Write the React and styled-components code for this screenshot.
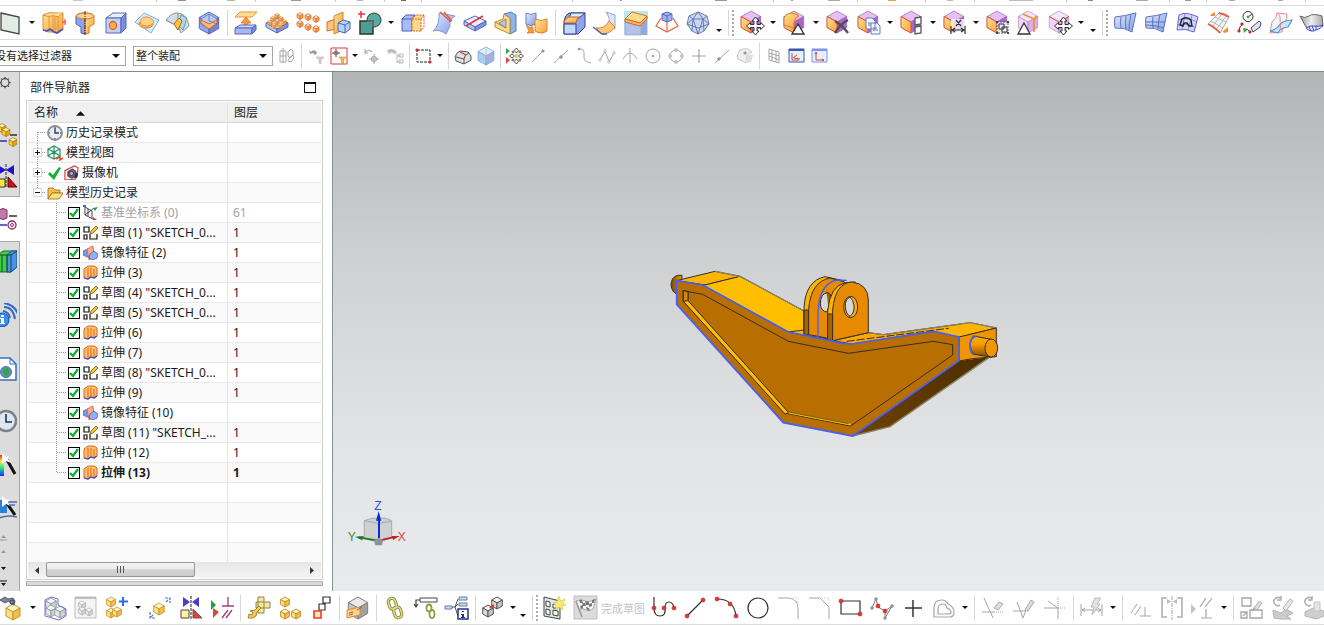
import React from "react";
import styled, { createGlobalStyle } from "styled-components";

const GlobalStyle = createGlobalStyle`
  * {
    box-sizing: border-box;
  }
  body {
    margin: 0;
    overflow: hidden;
    background: #fff;
    color: #1a1a1a;
    font-family: "Noto Sans", "Noto Sans CJK SC", sans-serif;
    font-size: 12px;
  }
  button, select, input {
    font: inherit;
    color: inherit;
    margin: 0;
    padding: 0;
    border: none;
    background: none;
    border-radius: 0;
  }
  svg {
    display: block;
    flex: none;
  }
`;

const Window = styled.div`
  height: 100vh;
  display: flex;
  flex-direction: column;
  overflow: hidden;
`;

const Strip = styled.div`
  height: 6px;
  flex: none;
  display: flex;
  overflow: hidden;
  border-bottom: 1px solid #dcdcdc;
`;

const StripPart = styled.div`
  flex: 0 0 ${(p) => p.$w}px;
  height: 2px;
  display: flex;
  justify-content: space-around;
  border-right: 1px solid #c8c8c8;
`;

const StripMark = styled.span`
  width: ${(p) => p.$w}px;
  height: 1px;
  background: ${(p) => p.$color};
`;

const Bar = styled.div`
  height: ${(p) => p.$h}px;
  flex: none;
  display: flex;
  align-items: center;
  overflow: hidden;
  background: #fff;
  border-bottom: 1px solid ${(p) => p.$line || "#dcdcdc"};
`;

const Group = styled.div`
  display: flex;
  flex: none;
  align-items: center;
  height: 100%;
  margin-left: ${(p) => p.$pull || 0}px;
`;

const Tool = styled.button`
  width: ${(p) => (p.$small ? 23 : 31)}px;
  height: 26px;
  flex: none;
  display: flex;
  align-items: center;
  justify-content: center;
  svg {
    overflow: visible;
  }
`;

const Drop = styled.button`
  width: ${(p) => p.$w || 12}px;
  height: ${(p) => (p.$low ? 18 : 12)}px;
  flex: none;
  display: flex;
  align-items: ${(p) => (p.$low ? "flex-end" : "center")};
  justify-content: center;
`;

const Rule = styled.span`
  width: 1px;
  height: 26px;
  flex: none;
  margin: 0 ${(p) => (p.$end ? 0 : 2)}px 0 3px;
  background: #d6d6d6;
`;

const Grip = styled.span`
  width: 2px;
  height: 26px;
  flex: none;
  margin: 0 3px;
  background: repeating-linear-gradient(#aaa 0 2px, #fff 2px 4px);
`;

const Caption = styled.span`
  width: 48px;
  flex: none;
  color: #c4c4c4;
  font-size: 11px;
  white-space: nowrap;
`;

const Combo = styled.div`
  display: grid;
  flex: none;
  align-items: center;
  width: ${(p) => p.$w}px;
  height: 20px;
  margin: 0 ${(p) => p.$mr || 3}px 0 ${(p) => p.$ml}px;
  border: 1px solid #a6a6a6;
  select,
  svg {
    grid-area: 1 / 1;
  }
  select {
    width: 100%;
    height: 18px;
    padding-left: 2px;
    appearance: none;
    font-size: 11px;
    outline: none;
  }
  svg {
    justify-self: end;
    margin-right: 5px;
    pointer-events: none;
  }
`;

const Main = styled.main`
  flex: 1;
  min-height: 0;
  display: flex;
`;

const Side = styled.nav`
  width: 20px;
  flex: none;
  display: flex;
  flex-direction: column;
  background: #dcdcdc;
`;

const SideTab = styled.button`
  height: ${(p) => p.$h}px;
  flex: none;
  display: flex;
  align-items: center;
  justify-content: flex-end;
  overflow: hidden;
  padding-right: ${(p) => (p.$active ? 3 : 2)}px;
  border-right: ${(p) => (p.$active ? 0 : 1)}px solid #a8a8a8;
  background: ${(p) => (p.$active ? "#fff" : "#dcdcdc")};
  border-top: ${(p) => (p.$active ? 1 : 0)}px solid #a8a8a8;
  border-bottom: ${(p) => (p.$active ? 1 : 0)}px solid #a8a8a8;
`;

const SideFill = styled.div`
  height: ${(p) => (p.$h ? `${p.$h}px` : "auto")};
  flex: ${(p) => (p.$h ? "none" : "1")};
  border-right: 1px solid #a8a8a8;
`;

const Panel = styled.section`
  width: 313px;
  flex: none;
  display: flex;
  flex-direction: column;
  padding: 0 9px 5px 6px;
  border-right: 1px solid #8b9296;
`;

const PanelHead = styled.header`
  height: 28px;
  flex: none;
  display: flex;
  align-items: center;
  justify-content: space-between;
  padding: 2px 7px 0 4px;
  h2 {
    margin: 0;
    font-size: 12px;
    font-weight: 400;
  }
`;

const Maximize = styled.button`
  width: 12px;
  height: 11px;
  border: 1px solid #111;
  border-top-width: 2px;
`;

const TreeBox = styled.div`
  flex: 1;
  min-height: 0;
  display: flex;
  flex-direction: column;
  padding: 1px;
  border: 1px solid #cfcfcf;
`;

const TreeClip = styled.div`
  flex: 1;
  min-height: 0;
  overflow: hidden;
`;

const Table = styled.table`
  width: 100%;
  table-layout: fixed;
  border-collapse: separate;
  border-spacing: 0;
  line-height: 18px;
  th,
  td {
    padding: 0 0 0 5px;
    font-weight: inherit;
    text-align: left;
    white-space: nowrap;
    overflow: hidden;
    border-bottom: 1px solid #e8e8e8;
  }
  th:first-child,
  td:first-child {
    width: 200px;
    border-right: 1px solid #e4e4e4;
  }
  th {
    height: 21px;
    padding: 2px 0 0 6px;
    background: #f0f0f0;
    border-color: #d8d8d8;
  }
`;

const Row = styled.tr`
  height: 20px;
  background: ${(p) => (p.$odd ? "#fafafa" : "#fff")};
  color: ${(p) => (p.$dim ? "#a2a2a2" : "#1a1a1a")};
  font-weight: ${(p) => (p.$bold ? 700 : 400)};
`;

const SortHead = styled.span`
  display: flex;
  align-items: center;
  gap: 18px;
`;

const Node = styled.div`
  height: 19px;
  display: flex;
  align-items: center;
  gap: 3px;
  label {
    word-break: keep-all;
  }
`;

const dots = (dir) =>
  `repeating-linear-gradient(to ${dir}, #9a9a9a 0 1px, transparent 1px 2px)`;

const RootGuide = styled.span`
  width: 14px;
  height: 19px;
  flex: none;
  margin-right: -3px;
  display: flex;
  align-items: center;
  background-image: ${dots("bottom")}, ${dots("right")};
  background-repeat: no-repeat;
  background-size: 1px ${(p) => (p.$first || p.$last ? 10 : 19)}px, 8px 1px;
  background-position: 4px ${(p) => (p.$first ? 9 : 0)}px, 5px 9px;
`;

const LeafGuide = styled.span`
  width: 35px;
  height: 19px;
  flex: none;
  margin-right: -3px;
  background-image: ${dots("bottom")}, ${dots("right")};
  background-repeat: no-repeat;
  background-size: 1px ${(p) => (p.$last ? 10 : 19)}px, 9px 1px;
  background-position: 23px 0, 24px 9px;
`;

const Toggle = styled.button`
  width: 9px;
  height: 9px;
  border: 1px solid #d8d8d8;
  background: ${(p) => (p.$open ? "" : "linear-gradient(#111, #111) 3px 1px / 1px 5px no-repeat,")}
    linear-gradient(#111, #111) 1px 3px / 5px 1px no-repeat, #fff;
`;

const Check = styled.input`
  width: 12px;
  height: 12px;
  flex: none;
  appearance: none;
  border: 1px solid #000;
  background: #fff;
  &:checked {
    background: #fff
      url("data:image/svg+xml,%3Csvg xmlns='http://www.w3.org/2000/svg' viewBox='0 0 10 10'%3E%3Cpath d='M1 5l3 3 5-7' fill='none' stroke='%2310b030' stroke-width='2.4'/%3E%3C/svg%3E")
      center / 10px 10px;
  }
`;

const ScrollRow = styled.div`
  height: 16px;
  flex: none;
  display: flex;
  background: linear-gradient(#e6e6e6, #f4f4f4);
`;

const ScrollEnd = styled.button`
  width: 18px;
  flex: none;
  display: flex;
  align-items: center;
  justify-content: center;
`;

const ScrollTrack = styled.div`
  flex: 1;
`;

const Thumb = styled.div`
  width: 58%;
  height: 15px;
  display: flex;
  align-items: center;
  justify-content: center;
  gap: 2px;
  border: 1px solid #979797;
  border-radius: 2px;
  background: linear-gradient(#f5f5f5, #e9e9eb 50%, #d6d6d8 50%, #cbcbcd);
  i {
    width: 1px;
    height: 7px;
    background: #555;
  }
`;

const Sash = styled.div`
  height: 5px;
  flex: none;
  margin-top: 1px;
  background: #dadada;
  border: 1px solid #a8a8a8;
  border-top-color: #bcbcbc;
`;

const Viewport = styled.section`
  flex: 1;
  min-width: 0;
  position: relative;
  overflow: hidden;
  background: linear-gradient(#b3b4b6, #cfd0d2 36%, #e3e4e6 73%, #e8eaec);
`;

const Model = styled.svg`
  position: absolute;
  left: 327px;
  top: 188px;
`;

const Triad = styled.svg`
  position: absolute;
  left: 2px;
  bottom: 31px;
  font-family: "Liberation Sans", sans-serif;
`;

/* ---------- icon building blocks ---------- */

const BLUE = ["#e3eefe", "#b3c9f6", "#8093e2", "#5468bc"];
const GOLD = ["#fff4c4", "#fde08a", "#f2bf4c", "#c8932c"];
const ORANGE = ["#ffe3ae", "#ffc468", "#f59a3c", "#d0702a"];
const VIOLET = ["#e8bff2", "#fdc44c", "#ab66ca", "#9a62b4"];
const GREY = ["#fafafa", "#e8e8e8", "#d2d2d2", "#b2b2b2"];
const ASM = ["#fff1a8", "#ffd23c", "#e8a818", "#a87410"];
const WIRE = ["#f4f6f6", "#e3e7e7", "#ccd3d3", "#8a9496"];

const Cube = ({ x = 12, y = 12, r = 10, c = BLUE, w = 1 }) => {
  const d = r * 0.88;
  const h = r / 2;
  return (
    <g stroke={c[3]} strokeWidth={w} strokeLinejoin="round">
      <path fill={c[0]} d={`M${x} ${y - r}l${d} ${h}l${-d} ${h}l${-d} ${-h}z`} />
      <path fill={c[1]} d={`M${x - d} ${y - h}l${d} ${h}v${r}l${-d} ${-h}z`} />
      <path fill={c[2]} d={`M${x + d} ${y - h}l${-d} ${h}v${r}l${d} ${-h}z`} />
    </g>
  );
};

const Slab = ({ y = 12, c = BLUE, t = 4 }) => (
  <g stroke={c[3]} strokeLinejoin="round">
    <path fill={c[0]} d={`M12 ${y - 6}l11 5-11 6-11-6z`} />
    <path fill={c[1]} d={`M1 ${y - 1}l11 6v${t}l-11-6z`} />
    <path fill={c[2]} d={`M23 ${y - 1}l-11 6v${t}l11-6z`} />
  </g>
);

const PALE = ["#f6e8fa", "#eed6f4", "#d8afe6", "#b083c4"];

const FaceCube = ({ pale, children }) => (
  <>
    <Cube x={11} y={11} r={11} c={pale ? PALE : VIOLET} w={0.7} />
    {!pale && <path d="M1 5.500l10 5.500v11L1 16.500z" fill="url(#amber)" stroke="#e0573e" />}
    {pale === "move" && <path d="M1 5.500l10 5.500 10-5.500" fill="none" stroke="#e0573e" />}
    {children}
  </>
);

const Move = () => (
  <path
    d="M15.500 6l3.500 4h-2v3.500h3.500v-2l4 3.500-4 3.500v-2h-3.500v3.500h2l-3.500 4-3.500-4h2v-3.500h-3.500v2l-4-3.500 4-3.500v2h3.500V10h-2z"
    fill="#fff"
    stroke="#333"
    strokeWidth="1"
  />
);

const Line = ({ d, c = "#a5a5a5", w = 1, fill = "none", dash }) => (
  <path d={d} stroke={c} strokeWidth={w} fill={fill} strokeDasharray={dash} />
);

const Dot = ({ x, y, r = 2, c = "#e33" }) => (
  <circle cx={x} cy={y} r={r} fill={c} stroke={c === "#e33" ? "#a11" : "#8a8a8a"} strokeWidth="0.5" />
);

const Tick = () => <path d="M1 8l2-2 3 3 6-8 2 1-7 12z" fill="#12b434" />;

const I = {
  sheet: <path d="M2 2l18 4v17L2 19z" fill="#e3ebe6" stroke="#444" strokeWidth="1.3" />,
  extrude: (
    <>
      <path d="M1 4l5-2q4-1 6 0h9v16l-5 4-4-1H6l-5-2z" fill="url(#amber)" stroke="#e08a3c" />
      <path d="M1 4q5 2 8 1t7 1l5-4" fill="#ffe6a4" stroke="#e08a3c" />
      <path d="M7 5v16M11 5v16M13 5v16M16 6v16" stroke="#e08a3c" strokeWidth=".8" fill="none" />
      <Line d="M1 19l4 1 3-2 4 3 3 1 6-4" c="#3a55c8" w={1.6} />
      <Line d="M20 11h4M23 8v6" c="#e33" />
    </>
  ),
  revolve: (
    <>
      <path d="M12 2Q4 2 3 5v8l5 3v6q2 1 4 1z" fill="#8aa5ea" stroke="#4a5fc0" />
      <path d="M12 2q8 0 9 3v8l-5 3v6q-2 1-4 1z" fill="url(#amber)" stroke="#d97a2c" />
      <path d="M3 5q2-3 9-3t9 3q-2 3-9 3T3 5z" fill="#ffd08a" stroke="#d97a2c" />
      <Line d="M12 0v24" c="#333" dash="4 1 1 1" />
    </>
  ),
  hole: (
    <>
      <path d="M2 7l7-5h13l-5 5z" fill="#e6effd" stroke="#5468bc" />
      <path d="M2 7h15v15H2z" fill="#c0d2f9" stroke="#5468bc" />
      <path d="M17 7l5-5v15l-5 5z" fill="#7c8ce0" stroke="#5468bc" />
      <ellipse cx="9" cy="14.500" rx="3.500" ry="4" fill="#ffb350" stroke="#e0602c" strokeWidth="1.400" />
    </>
  ),
  emboss: (
    <>
      <path d="M0 11L9 2l15 7-8 13z" fill="#d6eef9" stroke="#86add6" />
      <ellipse cx="11" cy="13" rx="7" ry="4" fill="#ffb95c" stroke="#dd7a30" />
      <path d="M5 12q0-6 6-6t8 5q-2 4-7 4t-7-3z" fill="#ffd283" stroke="#dd7a30" strokeWidth=".7" />
    </>
  ),
  bend: (
    <>
      <path d="M0 9Q6 1 12 2q9 1 11 13l-8 7-3-7q-2-3-5-2z" fill="#d4dde1" stroke="#8798a0" />
      <path d="M0 9l7 4M12 2v8" fill="none" stroke="#8798a0" />
      <path d="M12 14l3-10 6 3-4 12z" fill="#a9d6e8" stroke="#5a8aa0" strokeWidth=".8" />
      <path d="M8 13l5-6 3 3-4 9z" fill="#ffc23c" stroke="#a86c18" />
    </>
  ),
  pocket: (
    <>
      <Cube r={11} c={["#a9c2f3", "#8fa6ee", "#7286d8", "#5468bc"]} />
      <path d="M4 8l8-5 8 5v5l-8 5-8-5z" fill="#b8caf4" stroke="#5468bc" strokeWidth=".7" />
      <path d="M4 9l8 4 8-4v3l-8 6-8-6z" fill="#ffc070" stroke="#e0602c" />
      <path d="M12 3v7l8 3" fill="none" stroke="#5468bc" strokeWidth=".7" />
    </>
  ),
  offset: (
    <>
      <path d="M6 1h17l-5 5H1z" fill="#ffe08c" stroke="#eb9040" />
      <path d="M12 6l5 6h-3v4h-4v-4H7z" fill="#f79a3a" stroke="#d0702a" strokeWidth=".7" />
      <path d="M1 17l5-3h16l-4 3z" fill="#cfdafb" stroke="#5468bc" />
      <path d="M1 17h17v6H1z" fill="#a9b8f4" stroke="#5468bc" />
      <path d="M18 17l4-3v5l-4 4z" fill="#7c8ce0" stroke="#5468bc" />
    </>
  ),
  pattern: (
    <>
      <Slab y={13} t={4} />
      {[[12, 5], [8, 8], [16, 8], [5, 12], [12, 11], [19, 11], [9, 15], [15, 15]].map(([x, y]) => (
        <Cube key={`${x}-${y}`} x={x} y={y} r={2.6} c={ORANGE} w={0.5} />
      ))}
    </>
  ),
  patternFace: (
    <>
      {[[4, 5], [12, 6], [20, 8], [4, 13], [12, 16], [20, 18]].map(([x, y]) => (
        <Cube key={`${x}-${y}`} x={x} y={y} r={3.4} c={["#fff0c0", "#ffce6a", "#f79c4a", "#dc6c3a"]} w={0.8} />
      ))}
    </>
  ),
  mirror: (
    <>
      <path d="M0 11l9-3v10l-9 2z" fill="#f9c47c" stroke="#d0702a" />
      <path d="M7 5l9-4v18l-9 4z" fill="url(#amber)" stroke="#dc8030" />
      <path d="M11 12l5-3 7 2v7l-5 4-7-2z" fill="#b2d0f8" stroke="#4a68b8" />
      <path d="M11 12l7 2 5-3M18 14v8" fill="none" stroke="#4a68b8" />
    </>
  ),
  unite: (
    <>
      <circle cx="16" cy="9" r="7" fill="#52b0a3" stroke="#333" />
      <path d="M2 10h13v13H2z" fill="#4aa193" stroke="#333" strokeWidth="1.500" />
      <path d="M9 10h6v6" fill="none" stroke="#a7786f" />
      <Line d="M3 0v7M0 3h7" c="#e33" w={1.5} />
    </>
  ),
  split: (
    <>
      <path d="M1 8l4-4h9l-3 4v12H1z" fill="#aabcf6" stroke="#4a5fc0" />
      <path d="M1 8h10" stroke="#4a5fc0" />
      <path d="M11 8l4-4h8l-3 4v12h-9z" fill="#fddc88" />
      <path d="M11 8h9v12h-9zM11 8l4-4h8v12l-3 4M20 8l3-4" fill="none" stroke="#dc5a34" strokeDasharray="2 1" />
    </>
  ),
  trimSheet: (
    <>
      <path d="M7 2l16 3q-7 4-5 10l-4 8Q8 18 1 20 8 14 7 2z" fill="url(#sky)" stroke="#7f96d8" />
      <Line d="M8 1l11 10M12 1l8 9" c="#e0573e" w={1.3} />
    </>
  ),
  divide: (
    <>
      <Slab y={11} />
      <Line d="M3 15L20 5" c="#e33" w={1.5} />
    </>
  ),
  shell: (
    <>
      <path d="M10 3l7-2 5 3v16l-6 3V8z" fill="#8fb4ea" stroke="#5a78b8" />
      <path d="M10 3l6 4v16L1 16v-5l8-3z" fill="#fddc88" stroke="#b88c3c" />
      <path d="M5 12l7-4v9zM1 11l11 6" fill="#a9c8f2" stroke="#8f7a4c" strokeWidth=".8" />
    </>
  ),
  move2: (
    <>
      <path d="M1 2q5 3 10 0v11q-5 3-10 0z" fill="url(#sky)" stroke="#6a7fc8" />
      <path d="M10 8q6 3 12 0v12q-6 4-12 0z" fill="url(#amber)" stroke="#dc8030" />
      <path d="M1 14l5 3 1-2 2 7H2l2-2z" fill="#f79a3a" stroke="#d0702a" strokeWidth=".7" />
    </>
  ),
  blend: (
    <>
      <path d="M7 2h16v14l-7 7H2V10q1-6 5-8z" fill="#8fa3ea" stroke="#34408a" />
      <path d="M9 2h14l-6 5H7z" fill="#d7ecff" stroke="#34408a" />
      <path d="M2 12q0-4 5-6h11q-4 1-4 6z" fill="url(#amber)" stroke="#d0602a" />
      <path d="M2 13h12v10H2z" fill="#c4d8fb" stroke="#34408a" />
    </>
  ),
  fillet: (
    <>
      <path d="M13 1l9 3v14l-6-4q2-6-3-13z" fill="#dbe6fa" stroke="#93a5d4" />
      <path d="M3 17q9 1 13-7l6 6q-5 7-13 7z" fill="#ffc878" stroke="#dc8030" />
      <path d="M0 16l9 7 5 0" fill="none" stroke="#4a5fc0" strokeWidth="1.300" />
    </>
  ),
  chamfer: (
    <>
      <path d="M0 0h24v24H0z" fill="#b8e8ee" />
      <path d="M1 10l16 4v10H1z" fill="#b4c2e8" stroke="#93a5d4" strokeWidth=".7" />
      <path d="M17 14l6-7v17h-6z" fill="#93a8dc" />
      <path d="M1 8l7-7 15 4-7 7z" fill="#fddc88" stroke="#d97a3c" />
      <path d="M1 8l15 4 7-7v3l-7 7-15-4z" fill="#fbb868" stroke="#d0603a" />
    </>
  ),
  draft: (
    <>
      <path d="M7 3l5-2 5 2v6l-5 2-5-2z" fill="#9fb3ee" stroke="#5468bc" />
      <path d="M7 3l5 2 5-2M12 5v6" fill="none" stroke="#5468bc" />
      <Line d="M6 7L1 15l11 6 11-6-5-8M12 11v9" c="#e0673e" w={1.2} />
    </>
  ),
  polyBody: (
    <g stroke="#5f74ac" strokeWidth=".9">
      <path d="M12 1l9 4 2 8-5 7-6 3-6-3-5-7 2-8z" fill="#cbd7f1" />
      <path d="M12 1L7 8l5 15 5-15zM3 5l4 3-6 5M21 5l-4 3 6 5M7 8h10M1 13l11 4 11-4M7 8l-1 12M17 8l1 12" fill="none" />
    </g>
  ),
  moveFace: <FaceCube><Move /></FaceCube>,
  pullFace: (
    <FaceCube>
      <path d="M1 7Q4 0 13 3l3 2q-6 2-5 12L1 14z" fill="url(#amber)" stroke="#d97a3c" />
      <path d="M15 13l6 10H9z" fill="#fff" stroke="#333" strokeWidth="1.400" />
    </FaceCube>
  ),
  deleteFace: <FaceCube><Line d="M9 10q8 5 13 12M22 9Q14 13 9 22" c="#505050" w={2.4} /></FaceCube>,
  copyFace: (
    <FaceCube>
      <path d="M9 7h6l3 3v8H9zM14 12h6l3 3v8h-9z" fill="#f2f5ff" stroke="#6a7cb8" />
      <path d="M11 12h3M11 14h3M16 17h4M16 19h5" stroke="#6a7cb8" />
    </FaceCube>
  ),
  replaceFace: (
    <FaceCube>
      <path d="M15 7l6-1v7l-6 1zM15 16l6-1v7l-6 1z" fill="#fff" stroke="#555" strokeWidth="1.300" />
    </FaceCube>
  ),
  dimension: (
    <FaceCube>
      <path d="M8 8h15v15H8z" fill="#fff" fillOpacity=".75" />
      <Line d="M13 9l5 6M18 9l-5 6M8 15v8M22 15v8M9 19h12M12 17l-3 2 3 2M18 17l3 2-3 2" c="#333" w={1.2} />
    </FaceCube>
  ),
  groupFace: (
    <FaceCube>
      <path d="M11 11h11v11H11z" fill="#fff" fillOpacity=".8" stroke="#555" strokeDasharray="2 1" />
      <Line d="M13 13h5v5h-5zM16 16h5v5h-5z" c="#333" />
      <path d="M10 10h2v2h-2zM21 10h2v2h-2zM10 21h2v2h-2zM21 21h2v2h-2z" fill="#2d3bb8" />
    </FaceCube>
  ),
  sectionEdit: (
    <FaceCube pale>
      <path d="M6 3l11 5v13M17 8l3-3" fill="none" stroke="#f0903f" strokeWidth="1.800" />
      <path d="M7 12l6 11H1z" fill="#fff" stroke="#333" strokeWidth="1.300" />
    </FaceCube>
  ),
  moveEdge: <FaceCube pale="move"><Move /></FaceCube>,
  ruled: (
    <g stroke="#5a72c0">
      <path d="M1 6q10-1 21-4-2 9-4 19-8-5-17-4-1-6 0-11z" fill="url(#sky)" />
      <path d="M7 6q-1 5 0 11M12 5q-1 6 0 13M17 4q-2 7-2 15" fill="none" />
    </g>
  ),
  mesh: (
    <g stroke="#5a72c0">
      <path d="M1 6q10-1 21-4-2 9-4 19-8-5-17-4-1-6 0-11z" fill="url(#sky)" />
      <path d="M8 6q-1 5 0 11M15 4q-2 7-2 14M1 11q10 0 19 0M1 14q9 0 18 3" fill="none" />
    </g>
  ),
  nside: (
    <g stroke="#6a60dc">
      <path d="M3 4q7-4 19 2l-4 15q-8-4-17-2z" fill="#cfd8fa" />
      <path d="M9 3L6 18M16 4l-4 15M2 9q10-3 19 2M2 14q9-2 17 2" fill="none" strokeWidth=".7" />
      <path d="M4 14l2-6q5-3 9 1l1 6h-3l-2-3H8l-1 3z" fill="none" stroke="#222" strokeWidth="1.400" />
    </g>
  ),
  xform: (
    <>
      <path d="M1 13L12 2l10 4-9 16z" fill="#f4f4f4" stroke="#aaa" />
      <Line d="M4 10l12 7M8 6l11 5M5 16L15 3M9 19L19 5" c="#bbb" />
      <path d="M1 13q7 3 12 9M12 2q6 1 10 4" fill="none" stroke="#e86048" strokeWidth="1.800" />
      <path d="M3 4l5-3v4H4zM16 20l5-4v5l-4 1z" fill="#f0903f" />
    </>
  ),
  curves: (
    <>
      <circle cx="10" cy="5.500" r="5" fill="#fff" stroke="#333" />
      <Line d="M10 6l4-3M1 20q0-5 4-7M6 18q4-1 6 3" c="#333" />
      <Dot x={10} y={6} c="#3a3" r={1.2} />
      <Dot x={1} y={20} r={1.3} />
      <Dot x={4} y={13} r={1.3} />
      <Dot x={12} y={21} r={1.3} />
      <path d="M5 17l4 2-3 3z" fill="#3a3" />
      <path d="M13 17l8-7 2 2-1 4-7 5z" fill="#e8e8c0" stroke="#3a3fc8" />
    </>
  ),
  trimSurf: (
    <>
      <path d="M3 11q5-4 5-9l10 1q1 5-3 9l-2 9-12 1z" fill="#f2f6fa" stroke="#e58c8c" />
      <path d="M1 20q8-2 11-8 5-3 11-3l-4 7q-8 1-10 6z" fill="#cfe3f9" stroke="#5a90d0" strokeWidth="1.200" />
      <Line d="M8 2q4 2 3 9M12 12l-1 7" c="#e58c8c" />
    </>
  ),
  wave: (
    <>
      <path d="M0 5q5 3 9 0t13 0l1 10q-5 3-10 1-4 2-7 0z" fill="url(#steel)" stroke="#666" />
      <path d="M6 17q5-3 9-2t8-1q-2 4-7 5-5 3-10-2z" fill="#e6eaff" stroke="#3a48c8" />
      <path d="M9 16l2 4M12 15l2 5M16 15v4" stroke="#3a48c8" />
    </>
  ),

  // selection bar, 16px grid
  selAsm: <Line d="M1 3h6v11H1zM4 0v15M7 8H1M9 4l3-3 2 2v4l-3 3-2-2zM11 9l3-2 1 3-3 4-3-1z" w={1} />,
  filterOff: (
    <>
      <path d="M1 2l2 2q1-3 5-1l1 2-2 2-2-2-3 1z" fill="#999" />
      <path d="M8 9h8l-3 3v4l-2-1v-3z" fill="#d0d0d0" stroke="#b4b4b4" strokeWidth=".6" />
    </>
  ),
  filterOn: (
    <>
      <path d="M0 0h16v16H0z" fill="#fff" stroke="#d23b3b" />
      <Line d="M5 1v8M1 5h8" c="#444" />
      <circle cx="5" cy="5" r="2" fill="none" stroke="#a55" strokeWidth=".8" />
      <path d="M8 9h7l-2.500 3v3.500l-2-1V12z" fill="#f4b850" stroke="#cc8c2c" strokeWidth=".6" />
    </>
  ),
  undoSnap: <Line d="M1 5q3-5 7-1M1 1v4h3M10 6v10M5 11h10M7.500 11a2.500 2.500 0 1 0 5 0a2.500 2.500 0 1 0-5 0" w={1.1} />,
  tree: (
    <>
      <path d="M0 2l4-1 4 1 2 3-3 1-2-2-3 2z" fill="#bbb" />
      <Line d="M10 6v9M10 8h4M10 14h4M12 6h4v3h-4zM12 12h4v3h-4z" c="#b8b8b8" />
    </>
  ),
  lasso: (
    <>
      <Line d="M1 2h13v12H1z" c="#222" dash="3 1" />
      <Dot x={1} y={2} r={1.3} />
      <Dot x={14} y={14} r={1.3} />
    </>
  ),
  solid: (
    <>
      <path d="M0 9q1-4 5-6l8 1 3 4v4l-7 4-8-3z" fill="#e2e2e2" stroke="#555" />
      <path d="M1 9l8 2v5M9 11q0-4 5-6" fill="none" stroke="#555" />
      <Line d="M5 4l6 3" c="#e33" w={1.3} />
    </>
  ),
  blueCube: (
    <>
      <Cube x={8} y={8} r={9} c={["#d8f2fc", "#9fd6f5", "#9ab4ea", "#7f9fdc"]} w={0.8} />
      <Line d="M8 1v14M1 5l14 7M1 12l14-8" c="#d9a4b8" w={0.7} />
    </>
  ),
  snap: (
    <>
      <path d="M-1 0l4 3-4 3z" fill="#2aa940" />
      <path d="M-1 9l4 3-4 4z" fill="#d84848" />
      <g fill="#fff" stroke="#444" strokeWidth=".9">
        <path d="M9.500 0l2 2.500-2 2.500-2-2.500zM9.500 11l2 2.500-2 2.500-2-2.500zM5 6l2.500 2L5 10 2.500 8zM14 6l2.500 2-2.500 2-2.500-2z" />
        <circle cx="6" cy="4" r="1" /><circle cx="13" cy="4" r="1" /><circle cx="6" cy="12" r="1" /><circle cx="13" cy="12" r="1" />
      </g>
      <path d="M8 6h3v4H8z" fill="#f2d640" />
    </>
  ),
  endPt: <><Line d="M2 14L12 4" /><Dot x={13} y={3} r={1.3} c="#999" /></>,
  midPt: <><Line d="M1 15L15 2" /><Dot x={8} y={9} r={1.5} c="#999" /></>,
  ctrlPt: <><Line d="M2 1q7-1 6 6t7 8" /><Dot x={3} y={1} r={1} c="#999" /></>,
  zigPt: <><Line d="M1 12l5-9 4 11 5-9" /><Dot x={1} y={12} r={1.3} c="#fff" /><Dot x={6} y={3} r={1.3} c="#fff" /><Dot x={10} y={14} r={1.3} c="#fff" /><Dot x={15} y={5} r={1.3} c="#fff" /></>,
  cross: <Line d="M8 0v15M1 11q7-12 14 0" />,
  center: <><circle cx="8" cy="8" r="7" fill="none" stroke="#a5a5a5" /><Dot x={8} y={8} r={1} c="#999" /></>,
  quad: <><circle cx="8" cy="8" r="6" fill="none" stroke="#a5a5a5" /><g fill="#fff" stroke="#a5a5a5"><circle cx="8" cy="2" r="1.300" /><circle cx="8" cy="14" r="1.300" /><circle cx="2" cy="8" r="1.300" /><circle cx="14" cy="8" r="1.300" /></g></>,
  plus: <Line d="M8 1v14M1 8h14" w={1.2} />,
  onCurve: <><Line d="M1 15L15 2" /><Dot x={5} y={11} r={1.4} c="#999" /></>,
  onFace: <><path d="M0 8l3-6q5-2 8-1l4 3q-5 1-5 4l-1 7-8-4z" fill="#f0f0f0" stroke="#c4c4c4" /><path d="M10 8q2-2 6-1l-2 7-5 1z" fill="#ddd" /><Dot x={8} y={5} r={1.3} c="#999" /></>,
  grid: <Line d="M3 1l10 3v11L3 12zM6 2v11M10 3v11M3 5l10 3M3 8l10 4" />,
  wcs: (
    <>
      <path d="M0 1h15v13H0z" fill="#e6f0fc" stroke="#3a55b0" />
      <path d="M0 1h15v2H0z" fill="#3a55b0" />
      <Line d="M3 5v7h7M4 10l4-3M5 10l6 1" c="#c44" />
    </>
  ),
  wcs2: (
    <>
      <path d="M0 1h15v13H0z" fill="#e6f0fc" stroke="#7f94e8" />
      <path d="M0 1h15v2H0z" fill="#7f94e8" />
      <Line d="M4 5v7h8M3 6l1-2 1 2M10 11l2 1-2 1" c="#c44" />
    </>
  ),

  // assembly and sketch bar
  findPart: (
    <>
      <Cube x={13} y={16} r={8} c={GOLD} />
      <path d="M0 4l5-3 3 2 5-1 2 3-1 4-3-1-2-3-4 2z" fill="#7c889c" stroke="#444" strokeWidth=".8" />
      <circle cx="12" cy="6" r="2" fill="#6a8ac8" stroke="#333" strokeWidth=".8" />
    </>
  ),
  partWire: (
    <g>
      <Cube x={8} y={8} r={6} c={WIRE} w={0.8} />
      <Cube x={8} y={15} r={6} c={WIRE} w={0.8} />
      <Cube x={17} y={16} r={6} c={WIRE} w={0.8} />
      <Line d="M2 4l6-3 7 2v6l8 4v7l-7 4-14-4z" c="#6a74cc" />
    </g>
  ),
  partWin: (
    <>
      <path d="M1 1h21v21H1z" fill="#f4f4f4" stroke="#bdbdbd" />
      <path d="M1 1h21v2H1z" fill="#bdbdbd" />
      <Cube x={8} y={9} r={4} c={GREY} w={0.7} />
      <Cube x={8} y={15} r={4} c={GREY} w={0.7} />
      <Cube x={15} y={16} r={4} c={GREY} w={0.7} />
    </>
  ),
  addPart: (
    <>
      <Cube x={6} y={6} r={5} c={GOLD} w={0.8} />
      <Cube x={6} y={17} r={5} c={GOLD} w={0.8} />
      <Cube x={12} y={16} r={5} c={GOLD} w={0.8} />
      <Line d="M18 1v9M14 5.500h9" c="#2b6cf0" w={2} />
    </>
  ),
  movePart: (
    <>
      <Cube x={11} y={13} r={6} c={GOLD} w={0.8} />
      <Line d="M17 2h5v5M18 6l3-3M2 16v6h5M3 21l3-3" c="#4a74c8" w={1.2} dash="3 1" />
    </>
  ),
  mirrorAsm: (
    <>
      <path d="M4 1l7 5-7 5zM20 1l-7 5 7 5z" fill="#4a3cc8" />
      <path d="M2 14h8v8H2z" fill="#fdf3a0" stroke="#444" />
      <path d="M14 13l9 9h-9z" fill="#d04a44" stroke="#944" />
      <Line d="M12 0v24" c="#222" dash="3 1" />
    </>
  ),
  constrain: (
    <>
      <path d="M1 4l5 5-5 5z" fill="#23a03a" />
      <path d="M3 12l6 4-6 6z" fill="#d04a3c" />
      <Line d="M18 1v9M12 10h12M12 22l6-8M16 22l6-8" c="#9a3f7c" w={1.3} />
    </>
  ),
  wrench: (
    <>
      <path d="M11 1h6v5h6v6h-6v5h-6v-5H9V6h2z" fill="#f8ea9c" stroke="#8c8250" />
      <path d="M11 6h6v6h-6z" fill="none" stroke="#8c8250" />
      <path d="M1 22l1-4 3 1 1-3-3-1 5-1 4-4 2 2-4 4q0 5-4 6z" fill="#efc95a" stroke="#a88630" />
    </>
  ),
  explode: (
    <>
      <Cube x={7} y={6} r={5} c={GOLD} />
      <Cube x={7} y={18} r={5} c={GOLD} />
      <Cube x={18} y={18} r={5} c={GOLD} />
    </>
  ),
  sequence: (
    <g stroke="#333" strokeWidth="1.200">
      <path d="M14 1h7v6h-7zM10 8h6v6h-6z" fill="#fff" />
      <path d="M5 15h7v7H5z" fill="#f8f0a0" stroke="#e33" strokeWidth="1.600" />
    </g>
  ),
  clearance: (
    <>
      <Cube x={12} y={12} r={11} c={["#eaeaea", "#c4c4c4", "#a2a2a2", "#808080"]} />
      <path d="M1 14l13-3v8L1 22z" fill="#fad08c" stroke="#cc8a44" />
      <Line d="M3 17l4-1M3 19l4-1M11 14l5-3" c="#b06020" />
    </>
  ),
  chain: (
    <g fill="none" stroke="#8a8836" strokeWidth="3.200">
      <rect x="6" y="2" width="7" height="11" rx="3.500" transform="rotate(-18 10 8)" />
      <rect x="11" y="11" width="7" height="11" rx="3.500" transform="rotate(-18 14 16)" />
      <rect x="6" y="2" width="7" height="11" rx="3.500" transform="rotate(-18 10 8)" stroke="#e6e290" strokeWidth="1.400" />
      <rect x="11" y="11" width="7" height="11" rx="3.500" transform="rotate(-18 14 16)" stroke="#e6e290" strokeWidth="1.400" />
    </g>
  ),
  chainLink: (
    <>
      <path d="M6 2h17v4H6z" fill="#fff" stroke="#444" />
      <Line d="M6 4H2v6M0 8l2 3 2-3" c="#444" w={1.2} />
      <g fill="none" stroke="#9a9948" strokeWidth="1.800">
        <ellipse cx="15" cy="12" rx="2.500" ry="3.500" />
        <ellipse cx="18" cy="18" rx="2.500" ry="4" />
      </g>
    </>
  ),
  relation: (
    <>
      <path d="M0 10h7v3H0zM14 1h8v3h-8zM14 7h8v3h-8z" fill="#c8dcfa" stroke="#6a7ca0" />
      <Line d="M7 11h3l3-8M10 11l3-3M10 11l3 9" c="#555" />
      <path d="M13 13h10v10H13z" fill="#fff" stroke="#22318c" strokeWidth="1.500" />
      <path d="M17 15h2v1h-2zM16 18h3v3h1v1h-4v-1h1v-2h-1z" fill="#22318c" />
    </>
  ),
  wireCubes: (
    <g>
      <Cube x={15} y={7} r={6} c={["#f4f4f4", "#dcdcdc", "#c8c8c8", "#555"]} />
      <Cube x={6} y={15} r={6} c={["#f4f4f4", "#dcdcdc", "#c8c8c8", "#555"]} />
      <Line d="M8 12l4-3" c="#e33" w={2} />
    </g>
  ),
  sketchNew: (
    <>
      <path d="M1 1l16 4v18L1 20z" fill="#dcebe4" stroke="#444" />
      <path d="M3 5l4 1v5l-4-1zM3 13l4 1v5l-4-1zM10 14l5 1v5l-5-1zM10 8h4v4h-4z" fill="#fff" stroke="#444" />
      <path d="M16 0l1.500 5L22 3l-2 4 3 2-4 1 1 4-4-3-3 3v-5l-3-2 4-1z" fill="#f8ea70" stroke="#d0b838" strokeWidth=".5" />
    </>
  ),
  finish: (
    <>
      <path d="M0 0h23v23H0z" fill="#dcdcdc" stroke="#bcbcbc" />
      <path d="M2 5q5-3 9 0 5 2 11-2l-3 10q-4 3-7 1-4-3-7 0z" fill="#f6f6f6" stroke="#999" strokeWidth=".8" />
      <path d="M5 4h3l1 3H6zM11 5l4 1v3h-3zM8 7h3l1 3H9zM6 10l3-1v3l-2 1zM15 8l3-1v3l-3 1zM18 4l3-1-1 4h-2zM12 11l3 1 1 3-3-1z" fill="#777" />
      <Line d="M2 5l6 16" c="#999" w={1.5} />
    </>
  ),
  profile: (
    <>
      <Line d="M1 1v11q0 8 6 8t5-8q0-6 4-6t5 6" c="#333" w={1.2} />
      <Dot x={1} y={12} /><Dot x={11} y={12} /><Dot x={21} y={12} />
    </>
  ),
  line: <><Line d="M3 20L19 4" c="#333" w={1.2} /><Dot x={3} y={20} /><Dot x={19} y={4} /></>,
  arc: <><Line d="M2 3q17 0 19 17" c="#333" w={1.2} /><Dot x={2} y={3} /><Dot x={15} y={8} /><Dot x={21} y={20} /></>,
  circle: <circle cx="12" cy="12" r="10" fill="none" stroke="#333" strokeWidth="1.200" />,
  corner: <><Line d="M1 2h10q10 1 10 10v11" /><Line d="M12 2h9v9" c="#ddd" dash="2 1" /></>,
  chamferLine: <><Line d="M1 2h11l9 9v12" /><Line d="M13 2h8v8" c="#ddd" dash="2 1" /></>,
  rect: <><Line d="M2 5h19v13H2z" c="#333" w={1.2} /><Dot x={2} y={5} /><Dot x={21} y={18} /></>,
  spline: (
    <>
      <Line d="M2 12L6 3l2 8 7 4v7l7-12-7 5" c="#777" w={1} />
      <Dot x={2} y={12} c="#999" r={1.5} /><Dot x={6} y={3} c="#999" r={1.5} />
      <Dot x={8} y={10} /><Dot x={15} y={15} />
      <Dot x={15} y={22} c="#999" r={1.5} /><Dot x={22} y={10} c="#999" r={1.5} />
    </>
  ),
  bigPlus: <Line d="M12 4v17M4 12h17" c="#333" w={1.500} />,
  offsetCurve: <Line d="M2 21V12q0-8 8-8 4 0 6 4 6 3 6 8t-4 5zM6 18v-5q0-5 5-5 3 0 4 4 4 2 4 4t-3 2z" w={1.2} />,
  quickTrim: <><Line d="M3 2l9 20M1 16h13" /><Line d="M15 16h8" dash="1 1" /><path d="M13 12l5-6 4 2-5 6z" fill="#ddd" stroke="#aaa" /></>,
  quickExt: <><Line d="M1 15h13M5 6l6 16 3-8" /><path d="M13 14l6-10 3 2-6 9z" fill="#ddd" stroke="#aaa" /></>,
  makeCorner: <><Line d="M1 12h14v11M5 5l10 7" /><Line d="M15 12h8M15 1v11" dash="1 1" /></>,
  quickDim: <><Line d="M1 8v12M22 8v12M2 14h19M5 12l-3 2 3 2M18 12l3 2-3 2" /><path d="M15 2h6l-4 6h3l-8 11 2-8h-3z" fill="#e2e2e2" stroke="#bbb" /></>,
  geoCon: <Line d="M2 17l6-9M6 19l6-9M16 11v9M11 20h11" />,
  symCon: (
    <>
      <Line d="M7 2H2v19h5M17 2h5v19h-5" w={1.6} c="#b0b0b0" />
      <Line d="M12 0v24" dash="4 1 1 1" />
      <path d="M7 3l4 2.500L7 8zM17 3l-4 2.500L17 8z" fill="#bbb" />
    </>
  ),
  showCon: <><path d="M0 8l5 5-5 5z" fill="#c4c4c4" /><Line d="M9 11l6-9M14 11l7-9M15 13v9M10 22h11" w={1.2} /></>,
  editSk: <><Line d="M2 2h9v8H2zM10 14h12v8H10zM1 16h6v6H1zM3 20l3-3M12 15l3-4" w={1.3} /><path d="M14 12l5-7 3 2-5 7z" fill="#ddd" stroke="#b4b4b4" /></>,
  replay: <><path d="M2 14l8 3 5-4 7 4-6 3 4 3H9l-6-1z" fill="#ccc" stroke="#b4b4b4" /><path d="M12 12l7-9 3 2-7 10z" fill="#e8e8e8" stroke="#b4b4b4" /><Line d="M9 9a4 4 0 1 1 1-6M10 0v4H6" w={1.5} c="#b0b0b0" /></>,
  replay2: <><path d="M3 16l8-4 11 3v5l-8 3-11-3z" fill="#cfcfcf" stroke="#b4b4b4" /><path d="M12 6h6v9h-6z" fill="#e4e4e4" stroke="#c4c4c4" /><Line d="M9 9a4 4 0 1 1 1-6M10 0v4H6" w={1.5} c="#b0b0b0" /></>,

  // tree
  clock: (
    <>
      <circle cx="8" cy="8" r="7" fill="#e8ebef" stroke="#8c9094" strokeWidth="1.800" />
      <Line d="M8 3v5h4" c="#2d3f6a" w={1.4} />
      <path d="M8 2v1M8 13v1M2 8h1M13 8h1" stroke="#333" />
    </>
  ),
  modelView: (
    <>
      <Line d="M7 1l6 3v7l-6 3-6-3V4zM1 4l6 3 6-3M7 1v13M1 11l6-4 6 4" c="#1f9468" w={1.2} />
      <path d="M9 14l4-2v3l3-2" fill="none" stroke="#e8502a" strokeWidth="1.600" />
    </>
  ),
  camera: (
    <>
      <path d="M1 6l10-5 4 2-1 9-2 3-11 1z" fill="#fff" stroke="#e04038" strokeWidth="1.300" />
      <path d="M4 7l5-3 4 3-1 6-4 1-4-2z" fill="#5a6498" stroke="#222" strokeWidth=".7" />
      <path d="M12 8l3 1-1 4-3 1z" fill="#334" />
      <circle cx="8" cy="9" r="2.200" fill="#f09a8a" stroke="#222" strokeWidth=".7" />
    </>
  ),
  folder: (
    <>
      <path d="M1 4l1-1h4l2 2h5v3H5l-4 6z" fill="#f4c050" stroke="#9a6c14" strokeWidth=".8" />
      <path d="M5 8h11l-4 6H1z" fill="#ffdf7a" stroke="#9a6c14" strokeWidth=".8" />
    </>
  ),
  datum: (
    <>
      <Line d="M2 2v8l8 4M2 10l9-7M2 2l7 4v7M5 4v7" c="#444" />
      <path d="M10 3l5-1-3 4z" fill="#2a9a3a" />
      <path d="M10 12l4 3h-4z" fill="#d33" />
      <path d="M0 0h3v2H0z" fill="#55d" />
    </>
  ),
  sketch: (
    <>
      <Line d="M1 2h5v5H1zM1 10h3v4H1zM7 9v5h7V9" c="#111" w={1.2} />
      <path d="M7 9l1-3 5-5 2 2-5 5z" fill="#f7c534" stroke="#7a5614" strokeWidth=".8" />
    </>
  ),
  mirrorSm: (
    <>
      <path d="M0 6l5-2 2 2v5l-3 1-4-2z" fill="#7c98ea" stroke="#4a5cc0" strokeWidth=".7" />
      <path d="M4 4l6-3 1 11-5 3z" fill="#fbb080" stroke="#e05a34" strokeWidth=".8" />
      <path d="M7 9l4-3 4 3-1 4-4 2-4-2z" fill="#98adf5" stroke="#4a5cc0" strokeWidth=".8" />
    </>
  ),
  extrudeSm: (
    <>
      <path d="M1 4l4-3h6l3 2v8l-3 2-3-1-3 2-4-1z" fill="#fbc060" stroke="#e0602c" />
      <path d="M5 3v10M8 3v9M11 4v9" stroke="#e0602c" strokeWidth=".9" />
      <Line d="M1 13l4 1 3-2 3 1 3-2" c="#3a48c8" w={1.2} />
    </>
  ),

  // resource bar
  gear: (
    <>
      <circle cx="15" cy="12" r="5" fill="none" stroke="#444" strokeWidth="1.400" />
      <path d="M15 5v2M15 17v2M8 12h2M20 12h2M10 7l1 1M19 16l1 1M20 7l-1 1M11 16l-1 1" stroke="#444" strokeWidth="1.600" />
    </>
  ),
  asmNav: (
    <>
      <Cube x={9} y={5} r={4.5} c={ASM} w={0.7} />
      <Cube x={13} y={9} r={4.5} c={ASM} w={0.7} />
      <Cube x={20} y={19} r={4.5} c={ASM} w={0.7} />
      <Line d="M17 12h7" c="#222" w={1.4} />
      <Line d="M6 18h8" c="#22a" w={1.4} />
    </>
  ),
  conNav: (
    <>
      <path d="M5 1l8 5-8 5zM21 1l-8 5 8 5z" fill="#2012c8" />
      <path d="M4 15h8v8H4z" fill="#ffe93c" stroke="#333" />
      <path d="M15 13l9 10h-9z" fill="#c81414" stroke="#600" />
      <Line d="M13 0v24" c="#222" dash="3 1" />
    </>
  ),
  partNav: (
    <>
      <path d="M6 3q4-3 8 0v8q-4 3-8 0z" fill="#c07aac" stroke="#882a6c" />
      <Line d="M16 9h8" c="#222" w={1.4} />
      <Line d="M6 18h8" c="#22a" w={1.4} />
      <circle cx="19" cy="18" r="4" fill="#fff" stroke="#902060" strokeWidth="1.300" />
      <circle cx="19" cy="18" r="1.500" fill="none" stroke="#902060" />
    </>
  ),
  books: (
    <>
      <path d="M5 6l5-4h14v16l-6 5H5z" fill="#3fd03f" stroke="#1c6c28" />
      <path d="M14 6l5-4h5v16l-6 5h-4z" fill="#4a94e8" stroke="#1c4ca8" />
      <path d="M5 6h13l6-4M18 6v17M9 6v17M14 6v17" stroke="#124a38" fill="none" />
    </>
  ),
  info: (
    <>
      <Line d="M11 4q9 0 11 12M11 0q12 2 15 14M10 8q6 1 7 7" c="#3468c8" w={2} />
      <circle cx="9" cy="17" r="7" fill="#3b8fe8" stroke="#1c4ca8" />
      <path d="M8 12h3v2H8zM7 15h4v5h1v1H7v-1h1v-4H7z" fill="#fff" />
    </>
  ),
  webPage: (
    <>
      <path d="M4 1h13l6 6v16H4z" fill="#fff" stroke="#3b6fb8" strokeWidth="1.500" />
      <path d="M17 1v6h6" fill="none" stroke="#3b6fb8" />
      <circle cx="13" cy="15" r="5.500" fill="#5a98cc" stroke="#2a5a88" strokeWidth=".8" />
      <path d="M10 12l5-1 2 5-4 4-3-4z" fill="#3da048" />
    </>
  ),
  bigClock: (
    <>
      <circle cx="13" cy="12" r="10" fill="#dde7f2" stroke="#7c8288" strokeWidth="2.500" />
      <Line d="M13 5v8h6" c="#1c2f6a" w={1.6} />
    </>
  ),
  palette: (
    <>
      <path d="M2 2h9v21H2z" fill="url(#rainbow)" />
      <Line d="M13 5l9 16" c="#111" w={3} />
      <path d="M9 0l4 4 3-1-1 3 3 4-5-2-4 3V6z" fill="#fff" />
    </>
  ),
  magic: (
    <>
      <path d="M2 4h12v13H2z" fill="#2c82d8" />
      <Line d="M14 6h10M14 9h8M2 24q10-6 22-3" c="#4b6fa8" w={1.5} />
      <Line d="M13 6l9 13" c="#111" w={3} />
      <path d="M9 0l4 4 4-1-2 3 2 4-4-2-4 3V6z" fill="#fff" />
    </>
  ),
};

const Icon = ({ name, size = 24, box = size }) => (
  <svg width={size} height={size} viewBox={`0 0 ${box} ${box}`}>
    {I[name]}
  </svg>
);

const Caret = ({ w = 6, color = "#111", up }) => (
  <svg width={w} height={Math.ceil(w / 2)} viewBox="0 0 8 4">
    <path d={up ? "M0 4h8L4 0z" : "M0 0h8L4 4z"} fill={color} />
  </svg>
);

// "|" rule, "v" drop-down arrow, "_" overflow arrow
const Tools = ({ items, small }) =>
  items.map((name, i) => {
    if (name === "|") return <Rule key={i} />;
    if (name === "v")
      return (
        <Drop key={i} $w={small ? 10 : 12} aria-label="更多">
          <Caret />
        </Drop>
      );
    if (name === "_")
      return (
        <Drop key={i} $low aria-label="工具条选项">
          <Caret />
        </Drop>
      );
    return (
      <Tool key={i} $small={small} aria-label={name}>
        <Icon name={name} size={small ? 16 : 24} />
      </Tool>
    );
  });

const featureTools = [
  "sheet", "v", "extrude", "revolve", "hole", "emboss", "bend", "pocket", "|",
  "offset", "pattern", "patternFace", "mirror", "unite", "v", "split", "trimSheet",
  "divide", "shell", "move2", "|", "blend", "fillet", "chamfer", "draft", "polyBody", "_",
];
const syncTools = [
  "moveFace", "v", "pullFace", "v", "deleteFace", "copyFace", "v", "replaceFace", "v",
  "dimension", "v", "groupFace", "sectionEdit", "moveEdge", "v", "_",
];
const surfaceTools = ["ruled", "mesh", "nside", "xform", "curves", "trimSurf", "wave"];
const selectTools = [
  "selAsm", "|", "filterOff", "filterOn", "v", "undoSnap", "tree", "|", "lasso", "v", "|",
  "solid", "blueCube", "|", "snap", "endPt", "midPt", "ctrlPt", "zigPt", "cross", "center",
  "quad", "plus", "onCurve", "onFace", "|", "grid", "wcs", "wcs2",
];
const asmTools = [
  "findPart", "v", "partWire", "partWin", "addPart", "v", "movePart", "mirrorAsm",
  "constrain", "|", "wrench", "explode", "sequence", "|", "clearance", "|", "chain",
  "chainLink", "relation", "|", "wireCubes",
];
const sketchTools = [
  "profile", "line", "arc", "circle", "corner", "chamferLine", "rect", "spline", "bigPlus",
  "offsetCurve", "v", "|", "quickTrim", "quickExt", "makeCorner", "|", "quickDim", "v", "|",
  "geoCon", "symCon", "showCon", "v", "|", "editSk", "replay", "replay2",
];

const stripParts = [
  [157, [[10, "#c9c2e6"]]],
  [99, [[8, "#8a8f98"], [8, "#a8c48a"]]],
  [80, [[10, "#999"]]],
  [49, [[6, "#aab4e8"]]],
  [37, [[5, "#667"]]],
  [151, []],
  [201, [[2, "#999"], [12, "#999"]]],
  [84, [[2, "#999"], [12, "#aaa"]]],
  [68, [[8, "#e0a848"]]],
  [49, [[6, "#bbb"]]],
  [92, [[24, "#bbb"]]],
  [103, [[5, "#888"], [12, "#aaa"]]],
  [37, [[6, "#999"]]],
  [99, [[6, "#aaa"], [5, "#aaa"]]],
];

const roots = [
  { id: "mode", icon: "clock", text: "历史记录模式", first: true },
  { id: "view", icon: "modelView", text: "模型视图", toggle: "plus" },
  { id: "camera", icon: "camera", text: "摄像机", toggle: "plus", tick: true },
  { id: "history", icon: "folder", text: "模型历史记录", toggle: "minus", last: true },
];

const features = [
  { id: 0, icon: "datum", text: "基准坐标系 (0)", layer: "61", dim: true },
  { id: 1, icon: "sketch", text: '草图 (1) "SKETCH_0...', layer: "1" },
  { id: 2, icon: "mirrorSm", text: "镜像特征 (2)", layer: "1" },
  { id: 3, icon: "extrudeSm", text: "拉伸 (3)", layer: "1" },
  { id: 4, icon: "sketch", text: '草图 (4) "SKETCH_0...', layer: "1" },
  { id: 5, icon: "sketch", text: '草图 (5) "SKETCH_0...', layer: "1" },
  { id: 6, icon: "extrudeSm", text: "拉伸 (6)", layer: "1" },
  { id: 7, icon: "extrudeSm", text: "拉伸 (7)", layer: "1" },
  { id: 8, icon: "sketch", text: '草图 (8) "SKETCH_0...', layer: "1" },
  { id: 9, icon: "extrudeSm", text: "拉伸 (9)", layer: "1" },
  { id: 10, icon: "mirrorSm", text: "镜像特征 (10)", layer: "" },
  { id: 11, icon: "sketch", text: '草图 (11) "SKETCH_...', layer: "1" },
  { id: 12, icon: "extrudeSm", text: "拉伸 (12)", layer: "1" },
  { id: 13, icon: "extrudeSm", text: "拉伸 (13)", layer: "1", bold: true },
];

const sideTabs = [
  { icon: "asmNav", h: 43 },
  { icon: "conNav", h: 40 },
  { icon: "partNav", h: 46, active: true },
  { icon: "books", h: 38 },
  { icon: "info", h: 46, fill: 12 },
  { icon: "webPage", h: 46, fill: 8 },
  { icon: "bigClock", h: 46, fill: 6 },
  { icon: "palette", h: 42 },
  { icon: "magic", h: 44 },
];

function Defs() {
  return (
    <svg width="0" height="0" style={{ position: "absolute" }}>
      <defs>
        <linearGradient id="amber" x2="1" y2="1">
          <stop offset="0" stopColor="#ffe48a" />
          <stop offset="1" stopColor="#f8a040" />
        </linearGradient>
        <linearGradient id="sky" x2="1" y2="1">
          <stop offset="0" stopColor="#e3ecfd" />
          <stop offset="1" stopColor="#7f9ce4" />
        </linearGradient>
        <linearGradient id="steel">
          <stop offset="0" stopColor="#9a9a9a" />
          <stop offset=".5" stopColor="#eee" />
          <stop offset="1" stopColor="#a8a8a8" />
        </linearGradient>
        <linearGradient id="rainbow" x2="0" y2="1">
          <stop offset="0" stopColor="#f22" />
          <stop offset=".3" stopColor="#fe2" />
          <stop offset=".6" stopColor="#2e8" />
          <stop offset="1" stopColor="#22f" />
        </linearGradient>
        <linearGradient id="under" x1="0" y1="1" x2="1" y2="0">
          <stop offset="0" stopColor="#6e4200" />
          <stop offset="1" stopColor="#4c2e00" />
        </linearGradient>
        <linearGradient id="pin" x2="0" y2="1">
          <stop offset="0" stopColor="#ffb000" />
          <stop offset=".4" stopColor="#f89c00" />
          <stop offset="1" stopColor="#7e4a00" />
        </linearGradient>
        <linearGradient id="pinEnd">
          <stop offset="0" stopColor="#7e4a00" />
          <stop offset="1" stopColor="#e89400" />
        </linearGradient>
      </defs>
    </svg>
  );
}

function Part() {
  const edge = { stroke: "#33302a", strokeWidth: 3, strokeLinejoin: "round" };
  const blue = { stroke: "#4060ff", strokeWidth: 5, fill: "none" };
  return (
    <Model width="350" height="190" viewBox="0 0 1050 570">
      <path d="M66 46H52Q34 52 33 74q2 24 20 29h13z" fill="url(#pinEnd)" {...edge} />
      {/* left arm */}
      <path d="M52 62L70 57 165 34l75 15-105 26z" fill="#ffb400" {...edge} />
      <path d="M135 75L240 49l192 104v74l-47-11-257-141z" fill="#ffbf00" {...edge} />
      <path d="M165 34l75 15 192 104" fill="none" stroke="#8b8468" strokeWidth="4" />
      <path d="M385 216l47-6 20 5 60 30z" fill="#ffb400" {...edge} />
      {/* right arm */}
      <path d="M520 242l105-24 45 6 260-36 79 16-109 28-80-18-245 38z" fill="#ffa800" {...edge} />
      <path d="M820 214l110-26 79 16-112 28z" fill="#ffb400" />
      <path d="M897 232l112-28" {...edge} />
      <path d="M625 218l45 6 260-36 79 16" fill="none" stroke="#8b8468" strokeWidth="4" />
      <path d="M560 244L866 205" {...edge} strokeDasharray="24 6" />
      <path d="M897 231l112-27v86l-72 6-40 7z" fill="#f09400" {...edge} />
      <path d="M578 528L897 303l90-12L690 500z" fill="url(#under)" />
      <path d="M578 528l112-28 297-207" fill="none" stroke="#8b8468" strokeWidth="4" />
      <path d="M994 238l-54-10q-20 30 2 55l52 8z" fill="url(#pin)" {...edge} />
      <path d="M950 228q-22 6-20 32 2 20 12 24" {...blue} />
      <ellipse cx="994" cy="264" rx="19" ry="27" fill="#f29600" {...edge} />
      {/* rear lug */}
      <path d="M432 225V145Q436 62 495 50l50 11q-45 28-44 90v85z" fill="#ffb400" {...edge} />
      <path d="M432 150h14v74l-14 2z" fill="#a86400" {...edge} />
      <path d="M446 224V148Q452 65 510 54l44 12-45 170-40-8z" fill="#e88a00" {...edge} />
      <path d="M503 98q-22 2-22 34 2 22 20 24l10-30z" fill="#d6d7d9" {...edge} />
      <path d="M499 96q14 4 16 18l-8 38" fill="#a86400" {...edge} />
      <path d="M474 236V155Q478 72 530 60l30 1" {...blue} strokeWidth="4" />
      {/* front lug */}
      <path d="M503 242V152Q510 78 556 68l30-2-60 90v84z" fill="#ffb400" {...edge} />
      <path d="M503 162h15v80l-15-3z" fill="#a86400" {...edge} />
      <path d="M518 242V150Q526 68 576 66q48 6 49 54v98z" fill="#e88a00" {...edge} />
      <ellipse cx="572" cy="141" rx="21" ry="32" fill="#ffad10" {...edge} />
      <path d="M570 111q-16 8-14 30t14 28q14-10 12-32-2-18-12-26z" fill="#d6d7d9" {...edge} />
      {/* front plate */}
      <path d="M50 62l78 13 257 141 165 34 25 2 245-38 77 17v71L578 528l-208-40L50 133z" fill="#b86e00" />
      <path d="M50 62l78 13 257 141 165 34 25 2 245-38 77 17v71L578 528l-208-40L50 133z" {...blue} />
      <path d="M70 92l58 11 257 141 180 36 255-36 58 10v31L572 498l-192-38L70 124z" fill="none" {...edge} />
      <path d="M70 92l14 3v27l302 336-11 4L70 124z" fill="#ffbf00" {...edge} />
      <path d="M386 458l186 36" stroke="#ffbf00" strokeWidth="5" />
      <path d="M386 456l180 35" fill="none" {...edge} strokeWidth="2" />
      <path d="M70 92l14 3v27l-14 2z" fill="#d68600" {...edge} />
    </Model>
  );
}

function Axes() {
  return (
    <Triad width="100" height="70" viewBox="0 0 300 210">
      <path d="M88 92l22-7 40-1 20 8v52l-40 12-42-10z" fill="#cfd0d1" stroke="#a9aaab" strokeWidth="3" />
      <path d="M88 92l40 8 42-6" fill="none" stroke="#a9aaab" strokeWidth="3" />
      <path d="M130 152l-60-10" stroke="#1f7a24" strokeWidth="5" />
      <path d="M60 140l26-2-4 13z" fill="#1f7a24" />
      <path d="M132 152l50-12" stroke="#c22222" strokeWidth="5" />
      <path d="M194 138l-24 0 4 12z" fill="#c22222" />
      <path d="M132 145V85" stroke="#0a2fd0" strokeWidth="6" />
      <path d="M131 64l8 28h-16z" fill="#0a2fd0" />
      <path d="M117 150l14-6 14 6-4 16h-20z" fill="#909192" />
      <text x="118" y="61" fontSize="36" fill="#1f55e8">Z</text>
      <text x="38" y="152" fontSize="36" fill="#2f9434">Y</text>
      <text x="188" y="152" fontSize="36" fill="#d04848">X</text>
    </Triad>
  );
}

function Navigator() {
  return (
    <Panel>
      <PanelHead>
        <h2>部件导航器</h2>
        <Maximize aria-label="最大化" />
      </PanelHead>
      <TreeBox>
        <TreeClip>
          <Table>
            <thead>
              <tr>
                <th>
                  <SortHead>
                    名称
                    <Caret w={9} up />
                  </SortHead>
                </th>
                <th>图层</th>
              </tr>
            </thead>
            <tbody>
              {roots.map((r, i) => (
                <Row key={r.id} $odd={i % 2 === 1}>
                  <td>
                    <Node>
                      <RootGuide $first={r.first} $last={r.last}>
                        {r.toggle && <Toggle $open={r.toggle === "minus"} aria-label={r.text} />}
                      </RootGuide>
                      {r.tick && (
                        <svg width="14" height="14" viewBox="0 0 14 14">
                          <Tick />
                        </svg>
                      )}
                      <Icon name={r.icon} size={r.tick ? 15 : 16} box={16} />
                      <span>{r.text}</span>
                    </Node>
                  </td>
                  <td />
                </Row>
              ))}
              {features.map((f, i) => (
                <Row key={f.id} $odd={i % 2 === 1} $dim={f.dim} $bold={f.bold}>
                  <td>
                    <Node>
                      <LeafGuide $last={f.bold} />
                      <Check type="checkbox" id={`f${f.id}`} defaultChecked />
                      <Icon name={f.icon} size={15} box={15} />
                      <label htmlFor={`f${f.id}`}>{f.text}</label>
                    </Node>
                  </td>
                  <td>{f.layer}</td>
                </Row>
              ))}
              {[0, 1, 2, 3].map((n) => (
                <Row key={n} $odd={n % 2 === 1}>
                  <td />
                  <td />
                </Row>
              ))}
            </tbody>
          </Table>
        </TreeClip>
        <ScrollRow>
          <ScrollEnd aria-label="向左滚动">
            <svg width="4" height="7"><path d="M4 0v7L0 3.500z" fill="#333" /></svg>
          </ScrollEnd>
          <ScrollTrack>
            <Thumb><i /><i /><i /></Thumb>
          </ScrollTrack>
          <ScrollEnd aria-label="向右滚动">
            <svg width="4" height="7"><path d="M0 0v7l4-3.500z" fill="#333" /></svg>
          </ScrollEnd>
        </ScrollRow>
      </TreeBox>
      <Sash />
    </Panel>
  );
}

const ScrollMark = ({ up, bar, color }) => (
  <svg width="17" height="8" viewBox="0 0 17 8">
    <path d={up ? "M1 5h5L3.500 2z" : "M1 3h5L3.500 6z"} fill={color} />
    {bar && <path d={up ? "M0 7h7" : "M0 1h7"} stroke={color} />}
  </svg>
);

function ResourceBar() {
  return (
    <Side>
      <SideTab $h={26} aria-label="选项"><Icon name="gear" box={30} /></SideTab>
      <SideFill $h={15} />
      {sideTabs.map((t) => (
        <React.Fragment key={t.icon}>
          {t.fill && <SideFill $h={t.fill} />}
          <SideTab $h={t.h} $active={t.active} aria-label={t.icon}>
            <Icon name={t.icon} />
          </SideTab>
        </React.Fragment>
      ))}
      <SideTab $h={14} aria-label="到顶"><ScrollMark up bar color="#999" /></SideTab>
      <SideTab $h={16} aria-label="上移"><ScrollMark up color="#999" /></SideTab>
      <SideTab $h={16} aria-label="下移"><ScrollMark color="#111" /></SideTab>
      <SideTab $h={16} aria-label="到底"><ScrollMark bar color="#111" /></SideTab>
      <SideFill />
    </Side>
  );
}

function App() {
  return (
    <Window>
      <GlobalStyle />
      <Defs />
      <Strip>
        {stripParts.map(([w, marks], i) => (
          <StripPart key={i} $w={w}>
            {marks.map(([mw, color], k) => (
              <StripMark key={k} $w={mw} $color={color} />
            ))}
          </StripPart>
        ))}
      </Strip>
      <Bar $h={34}>
        <Group $pull={-5}>
          <Tools items={featureTools} />
        </Group>
        <Rule $end />
        <Grip />
        <Group $pull={-1}>
          <Tools items={syncTools} />
        </Group>
        <Rule $end />
        <Grip />
        <Group $pull={-1}>
          <Tools items={surfaceTools} />
        </Group>
      </Bar>
      <Bar $h={32} $line="#7d9080">
        <Combo $w={134} $ml={-8}>
          <select aria-label="选择过滤器">
            <option>没有选择过滤器</option>
          </select>
          <Caret w={8} />
        </Combo>
        <Combo $w={140} $ml={4} $mr={2}>
          <select aria-label="选择范围">
            <option>整个装配</option>
          </select>
          <Caret w={8} />
        </Combo>
        <Group>
          <Tools items={selectTools} small />
        </Group>
      </Bar>
      <Main>
        <ResourceBar />
        <Navigator />
        <Viewport>
          <Part />
          <Axes />
        </Viewport>
      </Main>
      <Bar $h={34}>
        <Group $pull={-4}>
          <Tools items={asmTools} />
          <Drop $w={8} aria-label="更多"><Caret /></Drop>
          <Drop $w={12} $low aria-label="工具条选项"><Caret /></Drop>
        </Group>
        <Rule $end />
        <Grip />
        <Group $pull={-2}>
          <Tools items={["sketchNew", "finish"]} />
        </Group>
        <Caption>完成草图</Caption>
        <Group>
          <Tools items={sketchTools} />
        </Group>
      </Bar>
    </Window>
  );
}

export default App;
